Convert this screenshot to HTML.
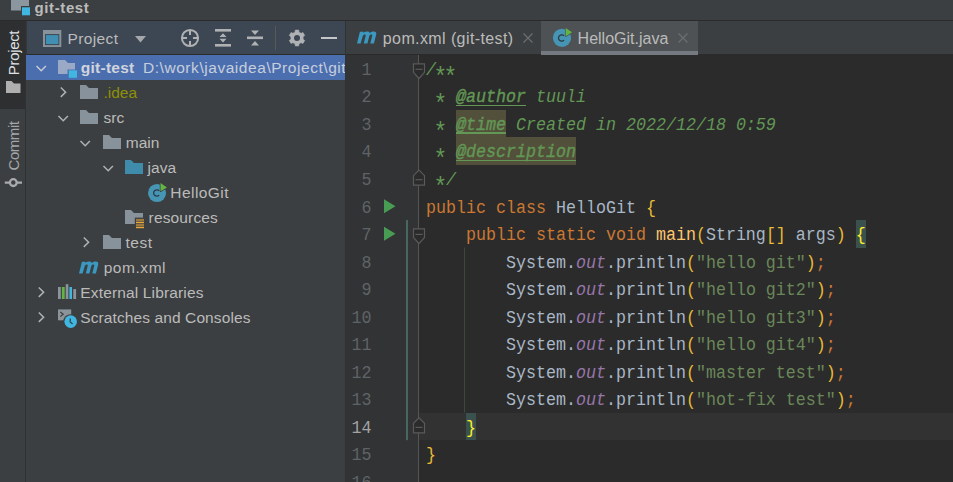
<!DOCTYPE html>
<html><head><meta charset="utf-8">
<style>
*{margin:0;padding:0;box-sizing:border-box}
html,body{width:953px;height:482px;overflow:hidden;background:#3c3f41}
body{position:relative;font-family:"Liberation Sans",sans-serif;color:#bbbbbb}
.a{position:absolute}
svg{position:absolute;overflow:visible}
#top{left:0;top:0;width:953px;height:20px;background:#3c3f41}
#topb{left:0;top:20px;width:953px;height:1px;background:#2b2b2b}
#strip{left:0;top:21px;width:25px;height:461px;background:#3c3f41}
#stripsel{left:0;top:21px;width:25px;height:88px;background:#2e2f30}
#stripb{left:25px;top:21px;width:1px;height:461px;background:#303132}
#proj{left:26px;top:21px;width:319px;height:461px;background:#3c3f41;overflow:hidden}
#phead{left:0;top:0;width:319px;height:33px;background:#3d4754}
#pheadb{left:0;top:33px;width:319px;height:1px;background:#2b2b2b}
#projb{left:345px;top:21px;width:1px;height:461px;background:#313233}
.row{position:absolute;left:0;width:319px;height:25px;white-space:nowrap}
.row .t{position:absolute;top:0;line-height:25px;font-size:15.5px;color:#bbbbbb}
.sel{background:#4b6eaf}
#ed{left:346px;top:21px;width:607px;height:461px;background:#2b2b2b;overflow:hidden}
#tabs{left:0;top:0;width:607px;height:33px;background:#3c3f41}
.ln{position:absolute;left:0.6px;transform-origin:0 18.1px;transform:translateY(2.3px) scaleY(1.11);width:25px;text-align:right;font-family:"Liberation Mono",monospace;font-size:16.67px;color:#606366;height:27.52px;line-height:27.52px}
.code{position:absolute;left:80px;transform-origin:0 18.1px;transform:translateY(2.3px) scaleY(1.11);white-space:pre;font-family:"Liberation Mono",monospace;font-size:16.67px;color:#a9b7c6;height:27.52px;line-height:27.52px}
.kw{color:#cc7832}
.str{color:#6a8759}
.doc{color:#629755;font-style:italic}
.tag{color:#629755;font-style:italic;font-weight:normal;-webkit-text-stroke:0.35px #629755}
.ast{display:inline-block;font-style:normal;width:10px;transform:translate(-0.6px,7.4px) scale(1.38)}
.br{color:#e8ba36}
.fn{color:#ffc66d}
.st{color:#9876aa;font-style:italic}
.lrow{position:absolute;left:0;width:607px;height:27.52px}
.cur .ln{color:#a4a3a3}
.mt{color:#ffef28}
</style></head><body>
<div id="top" class="a">
  <svg width="20" height="16" style="left:11px;top:0">
    <rect x="0" y="0" width="18" height="10.5" fill="#8c969e"/>
    <rect x="10" y="6" width="10" height="10" fill="#3c3f41"/>
    <rect x="11" y="7.3" width="8" height="8" fill="#40b6e0"/>
  </svg>
  <div class="a" style="left:34.6px;top:-2.35px;font-size:15px;font-weight:bold;color:#bbbbbb;line-height:20px;letter-spacing:0.6px">git-test</div>
</div>
<div id="topb" class="a"></div>
<div id="strip" class="a"></div>
<div id="stripsel" class="a"></div>
<div class="a" style="left:-15.4px;top:42.6px;width:58px;height:20px;transform:rotate(-90deg);font-size:15px;line-height:20px;color:#dfe1e5;text-align:center;letter-spacing:-0.35px">Project</div>
<svg width="16" height="14" style="left:6px;top:81px"><path d="M0 0 H5.5 L8 2.5 H14.5 V12 H0 Z" fill="#afafaf"/></svg>
<div class="a" style="left:-16px;top:135.5px;width:60px;height:20px;transform:rotate(-90deg);font-size:15px;line-height:20px;color:#a3a6a9;text-align:center;letter-spacing:-0.45px">Commit</div>
<svg width="20" height="12" style="left:4px;top:177px">
  <circle cx="9.3" cy="5.6" r="3.4" stroke="#a9abad" stroke-width="2.3" fill="none"/>
  <path d="M0.8 5.6 H6 M12.6 5.6 H18" stroke="#a9abad" stroke-width="2.3"/>
</svg>
<div id="stripb" class="a"></div>

<div id="proj" class="a">
  <div id="phead" class="a">
    <svg width="20" height="20" style="left:17px;top:9px">
      <rect x="0" y="0" width="18.3" height="17" fill="#87929a"/>
      <rect x="2" y="4.1" width="14.3" height="11" fill="#3d4754"/>
      <rect x="2.9" y="5.1" width="12.5" height="9" fill="#4190b3"/>
    </svg>
    <div class="a" style="left:41.6px;top:4.8px;font-size:15.5px;line-height:25px;color:#bbbbbb;letter-spacing:0.35px">Project</div>
    <svg width="12" height="8" style="left:108.5px;top:15px"><path d="M0 0 H11 L5.5 6.5 Z" fill="#a5a8ab"/></svg>
    <svg width="20" height="20" style="left:154px;top:8px">
      <circle cx="10" cy="9" r="8.1" stroke="#afb1b3" stroke-width="2" fill="none"/>
      <path d="M10 1 V6 M10 12 V17 M2 9 H7 M13 9 H18" stroke="#afb1b3" stroke-width="2"/>
    </svg>
    <svg width="20" height="20" style="left:189px;top:8px">
      <rect x="0" y="0" width="16" height="2.6" fill="#afb1b3"/>
      <rect x="0" y="15" width="16" height="2.6" fill="#afb1b3"/>
      <path d="M4.5 8 L8 4.3 L11.5 8 Z M4.5 9.8 L8 13.5 L11.5 9.8 Z" fill="#afb1b3"/>
    </svg>
    <svg width="20" height="20" style="left:221px;top:8px">
      <rect x="0" y="7.5" width="16" height="2.6" fill="#afb1b3"/>
      <path d="M4 1.5 H12 L8 6 Z M4 16.5 H12 L8 12 Z" fill="#afb1b3"/>
    </svg>
    <div class="a" style="left:249px;top:5px;width:1px;height:24px;background:#595854"></div>
    <svg width="18" height="18" style="left:263px;top:9px"><path d="M5.98 2.14 L6.32 0.08 L9.68 0.08 L10.02 2.14 L12.07 3.32 L14.02 2.58 L15.70 5.50 L14.09 6.82 L14.09 9.18 L15.70 10.50 L14.02 13.42 L12.07 12.68 L10.02 13.86 L9.68 15.92 L6.32 15.92 L5.98 13.86 L3.93 12.68 L1.98 13.42 L0.30 10.50 L1.91 9.18 L1.91 6.82 L0.30 5.50 L1.98 2.58 L3.93 3.32 Z" fill="#afb1b3" stroke="#afb1b3" stroke-width="0.6" stroke-linejoin="round"/><circle cx="8" cy="8" r="3" fill="#3d4754"/></svg>
    <div class="a" style="left:295px;top:15.8px;width:16px;height:2.5px;background:#c4c6c8"></div>
  </div>
  <div id="pheadb" class="a"></div>
  <div class="a" style="left:0;top:0;width:1px;height:33px;background:#35383a"></div>

  <div class="row sel" style="top:34px">
    <svg width="12" height="8" style="left:10px;top:9px"><path d="M0.5 2 L5.2 6.7 L9.9 2" stroke="#c5cbd6" stroke-width="1.5" fill="none"/></svg>
    <svg width="20" height="20" style="left:32px;top:5px">
      <path d="M0 0 H7 L10 3 H17 V14 H0 Z" fill="#9aaac6"/>
      <rect x="9.5" y="9.5" width="9" height="9" fill="#4b6eaf"/>
      <rect x="10.8" y="10.3" width="8.2" height="7.5" fill="#40b6e0"/>
    </svg>
    <div class="t" style="left:54.8px;font-weight:bold;color:#d0d4dc;letter-spacing:0.25px">git-test</div>
    <div class="t" style="left:117px;color:#c7cfdc;letter-spacing:0.55px">D:\work\javaidea\Project\git-test</div>
  </div>
  <div class="row" style="top:59px">
    <svg width="8" height="12" style="left:33px;top:6px"><path d="M1.8 1.5 L6.6 6.2 L1.8 10.9" stroke="#afb1b3" stroke-width="1.5" fill="none"/></svg>
    <svg width="20" height="20" style="left:54px;top:5px"><path d="M0 0 H6 L9 3 H18 V14 H0 Z" fill="#87929a"/></svg>
    <div class="t" style="left:77.5px;color:#8c9007">.idea</div>
  </div>
  <div class="row" style="top:84px">
    <svg width="12" height="8" style="left:32px;top:9px"><path d="M0.5 2 L5.2 6.7 L9.9 2" stroke="#afb1b3" stroke-width="1.5" fill="none"/></svg>
    <svg width="20" height="20" style="left:54px;top:5px"><path d="M0 0 H6 L9 3 H18 V14 H0 Z" fill="#87929a"/></svg>
    <div class="t" style="left:77.5px">src</div>
  </div>
  <div class="row" style="top:109px">
    <svg width="12" height="8" style="left:54px;top:9px"><path d="M0.5 2 L5.2 6.7 L9.9 2" stroke="#afb1b3" stroke-width="1.5" fill="none"/></svg>
    <svg width="20" height="20" style="left:77px;top:5px"><path d="M0 0 H6 L9 3 H18 V14 H0 Z" fill="#87929a"/></svg>
    <div class="t" style="left:99.8px">main</div>
  </div>
  <div class="row" style="top:134px">
    <svg width="12" height="8" style="left:77px;top:9px"><path d="M0.5 2 L5.2 6.7 L9.9 2" stroke="#afb1b3" stroke-width="1.5" fill="none"/></svg>
    <svg width="20" height="20" style="left:99px;top:5px"><path d="M0 0 H6 L9 3 H18 V14 H0 Z" fill="#3f8bab"/></svg>
    <div class="t" style="left:121.6px">java</div>
  </div>
  <div class="row" style="top:159px">
    <svg width="30" height="30" style="left:122px;top:0px"><circle cx="9.05" cy="13.00" r="9.05" fill="#4695b5"/><path d="M11.18 10.86 A3.20 3.20 0 1 0 11.18 15.14" stroke="#2c3b41" stroke-width="1.25" fill="none"/><path d="M12.50 3.10 L19.00 7.40 L12.50 11.30 Z" fill="#62b543" stroke="#3c3f41" stroke-width="1.4" paint-order="stroke" stroke-linejoin="round"/></svg>
    <div class="t" style="left:144.3px;letter-spacing:0.45px">HelloGit</div>
  </div>
  <div class="row" style="top:184px">
    <svg width="22" height="20" style="left:99px;top:5px">
      <path d="M0 0 H6 L9 3 H18 V14 H0 Z" fill="#87929a"/>
      <rect x="9.8" y="7.6" width="10.4" height="11.6" fill="#3c3f41"/>
      <rect x="11" y="8.9" width="8" height="2.2" fill="#9c7a3e"/>
      <rect x="11" y="11.7" width="8" height="1.5" fill="#e3a73a"/>
      <rect x="11" y="13.9" width="8" height="2.2" fill="#9c7a3e"/>
      <rect x="11" y="16.7" width="8" height="1.5" fill="#e3a73a"/>
    </svg>
    <div class="t" style="left:122.6px;letter-spacing:0.15px">resources</div>
  </div>
  <div class="row" style="top:209px">
    <svg width="8" height="12" style="left:56px;top:6px"><path d="M1.8 1.5 L6.6 6.2 L1.8 10.9" stroke="#afb1b3" stroke-width="1.5" fill="none"/></svg>
    <svg width="20" height="20" style="left:77px;top:5px"><path d="M0 0 H6 L9 3 H18 V14 H0 Z" fill="#87929a"/></svg>
    <div class="t" style="left:99.5px;letter-spacing:0.5px">test</div>
  </div>
  <div class="row" style="top:234px">
    <svg width="20" height="14" style="left:53.4px;top:5.8px"><path d="M0 12.5 L2.9 0.8 H6.5 L6.3 1.8 C7.5 0.9 8.9 0.5 10.2 0.5 C11.7 0.5 12.6 1.1 12.9 2.1 C14.1 0.9 15.5 0.5 16.9 0.5 C18.8 0.5 19.6 1.8 19.2 3.6 L16.9 12.5 H13.3 L15.2 4.8 C15.4 4 15 3.4 14.3 3.4 C13.4 3.4 12.6 4 12.3 5 L10.4 12.5 H6.8 L8.7 4.8 C8.9 4 8.5 3.4 7.8 3.4 C6.9 3.4 6.1 4 5.8 5 L3.6 12.5 Z" fill="#3a98c1"/></svg>
    <div class="t" style="left:77.7px;letter-spacing:0.55px">pom.xml</div>
  </div>
  <div class="row" style="top:259px">
    <svg width="8" height="12" style="left:11px;top:6px"><path d="M1.8 1.5 L6.6 6.2 L1.8 10.9" stroke="#afb1b3" stroke-width="1.5" fill="none"/></svg>
    <svg width="20" height="22" style="left:32px;top:0"><rect x="0" y="7" width="2.8" height="12" fill="#8c949a"/><rect x="3.9" y="7" width="2.8" height="12" fill="#62b543"/><rect x="7.7" y="4.2" width="2.7" height="14.8" fill="#8c949a"/><rect x="11.4" y="7" width="2.6" height="12" fill="#40b6e0"/><rect x="15.3" y="9.1" width="2.8" height="9.9" fill="#8c949a"/></svg>
    <div class="t" style="left:54.3px;letter-spacing:0.15px">External Libraries</div>
  </div>
  <div class="row" style="top:284px">
    <svg width="8" height="12" style="left:11px;top:6px"><path d="M1.8 1.5 L6.6 6.2 L1.8 10.9" stroke="#afb1b3" stroke-width="1.5" fill="none"/></svg>
    <svg width="22" height="24" style="left:32px;top:0"><rect x="0" y="4.4" width="13.2" height="10.9" fill="#8c949a"/><path d="M2.3 7 L5.2 9.3 L2.3 11.6" stroke="#3c3f41" stroke-width="1.2" fill="none"/><circle cx="12.7" cy="16.6" r="7.4" fill="#3c3f41"/><circle cx="12.7" cy="16.6" r="6.3" fill="#40b6e0"/><path d="M12.2 13.6 V16.9 L14.6 19" stroke="#2b4a56" stroke-width="1.3" fill="none"/></svg>
    <div class="t" style="left:54.3px;letter-spacing:0.1px">Scratches and Consoles</div>
  </div>
</div>
<div id="projb" class="a"></div>

<div id="ed" class="a">
  <div id="tabs" class="a">
    <svg width="20" height="14" style="left:11.4px;top:9.8px"><path d="M0 12.5 L2.9 0.8 H6.5 L6.3 1.8 C7.5 0.9 8.9 0.5 10.2 0.5 C11.7 0.5 12.6 1.1 12.9 2.1 C14.1 0.9 15.5 0.5 16.9 0.5 C18.8 0.5 19.6 1.8 19.2 3.6 L16.9 12.5 H13.3 L15.2 4.8 C15.4 4 15 3.4 14.3 3.4 C13.4 3.4 12.6 4 12.3 5 L10.4 12.5 H6.8 L8.7 4.8 C8.9 4 8.5 3.4 7.8 3.4 C6.9 3.4 6.1 4 5.8 5 L3.6 12.5 Z" fill="#3a98c1"/></svg>
    <div class="a" style="left:36.8px;top:4.6px;font-size:16px;line-height:25px;color:#bbbbbb;letter-spacing:0.4px">pom.xml (git-test)</div>
    <svg width="12" height="12" style="left:177px;top:12px"><path d="M0.5 0.5 L9.5 9.5 M9.5 0.5 L0.5 9.5" stroke="#6e7072" stroke-width="1.1"/></svg>
    <div class="a" style="left:195px;top:0;width:157px;height:33px;background:#4e5254"></div>
    <div class="a" style="left:195px;top:30px;width:157px;height:3.5px;background:#747a80"></div>
    <svg width="30" height="30" style="left:202px;top:3px"><circle cx="14.00" cy="13.80" r="9.10" fill="#4695b5"/><path d="M16.08 11.86 A3.20 3.20 0 1 0 16.08 16.14" stroke="#2c3b41" stroke-width="1.25" fill="none"/><path d="M17.70 4.10 L24.10 8.30 L17.70 12.20 Z" fill="#62b543" stroke="#4e5254" stroke-width="1.4" paint-order="stroke" stroke-linejoin="round"/></svg>
    <div class="a" style="left:231.6px;top:4.6px;font-size:16px;line-height:25px;color:#bbbbbb;letter-spacing:0px">HelloGit.java</div>
    <svg width="12" height="12" style="left:332px;top:12px"><path d="M0.5 0.5 L9.5 9.5 M9.5 0.5 L0.5 9.5" stroke="#6e7072" stroke-width="1.1"/></svg>
  </div>
  <div id="edc" class="a" style="left:0;top:34px;width:607px;height:427px;overflow:hidden">
    <div class="a" style="left:0;top:0;width:73px;height:427px;background:#313335"></div>
    <div class="a" style="left:73px;top:357.66px;width:534px;height:27.52px;background:#323232"></div>
    <div class="a" style="left:110.0px;top:54.94px;width:50.0px;height:27.52px;background:#52503a"></div>
    <div class="a" style="left:110.0px;top:82.46px;width:120.0px;height:27.52px;background:#52503a"></div>
    <div class="a" style="left:510.0px;top:165.02px;width:10.0px;height:27.52px;background:#3b514d"></div>
    <div class="a" style="left:120.0px;top:357.66px;width:10.0px;height:27.52px;background:#3b514d"></div>
    <div class="a" style="left:110.0px;top:49.72px;width:70.0px;height:1.4px;background:#629755"></div>
    <div class="a" style="left:110.0px;top:77.24px;width:50.0px;height:1.4px;background:#629755"></div>
    <div class="a" style="left:110.0px;top:104.76px;width:120.0px;height:1.4px;background:#629755"></div>
    <svg width="607" height="427" style="left:0;top:0"><rect x="72" y="0" width="1" height="427" fill="#555555"/><rect x="60" y="165.02" width="2" height="220.16" fill="#49665f"/><path d="M38 144.20 L49.5 151.20 L38 158.20 Z" fill="#499c54"/><path d="M38 171.72 L49.5 178.72 L38 185.72 Z" fill="#499c54"/><path d="M67.5 8.80 H78.5 V17.30 L73 23.50 L67.5 17.30 Z" fill="#2b2b2b" stroke="#5a5a5a" stroke-width="1.2"/><path d="M69.5 14.30 H76.5" stroke="#5a5a5a" stroke-width="1.2"/><path d="M67.5 173.92 H78.5 V182.42 L73 188.62 L67.5 182.42 Z" fill="#2b2b2b" stroke="#5a5a5a" stroke-width="1.2"/><path d="M69.5 179.42 H76.5" stroke="#5a5a5a" stroke-width="1.2"/><path d="M67.5 130.18 H78.5 V120.68 L73 115.18 L67.5 120.68 Z" fill="#2b2b2b" stroke="#5a5a5a" stroke-width="1.2"/><path d="M69.5 124.68 H76.5" stroke="#5a5a5a" stroke-width="1.2"/><path d="M67.5 377.86 H78.5 V368.36 L73 362.86 L67.5 368.36 Z" fill="#2b2b2b" stroke="#5a5a5a" stroke-width="1.2"/><path d="M69.5 372.36 H76.5" stroke="#5a5a5a" stroke-width="1.2"/><rect x="118" y="192.54" width="1" height="165.12" fill="#3b4a3b"/></svg>
    <div class="lrow" style="top:-0.10px"><div class="ln">1</div><div class="code"><span class="doc">/<span class="ast">*</span><span class="ast">*</span></span></div></div>
    <div class="lrow" style="top:27.42px"><div class="ln">2</div><div class="code"><span class="doc"> <span class="ast">*</span> </span><span class="tag">@author</span><span class="doc"> tuuli</span></div></div>
    <div class="lrow" style="top:54.94px"><div class="ln">3</div><div class="code"><span class="doc"> <span class="ast">*</span> </span><span class="tag">@time</span><span class="doc"> Created in 2022/12/18 0:59</span></div></div>
    <div class="lrow" style="top:82.46px"><div class="ln">4</div><div class="code"><span class="doc"> <span class="ast">*</span> </span><span class="tag">@description</span></div></div>
    <div class="lrow" style="top:109.98px"><div class="ln">5</div><div class="code"><span class="doc"> <span class="ast">*</span>/</span></div></div>
    <div class="lrow" style="top:137.50px"><div class="ln">6</div><div class="code"><span class="kw">public class </span>HelloGit <span class="br">{</span></div></div>
    <div class="lrow" style="top:165.02px"><div class="ln">7</div><div class="code"><span class="kw">    public static void </span><span class="fn">main</span><span class="br">(</span>String<span class="br">[]</span> args<span class="br">)</span> <span class="mt">{</span></div></div>
    <div class="lrow" style="top:192.54px"><div class="ln">8</div><div class="code">        System.<span class="st">out</span>.println<span class="br">(</span><span class="str">"hello git"</span><span class="br">)</span><span class="kw">;</span></div></div>
    <div class="lrow" style="top:220.06px"><div class="ln">9</div><div class="code">        System.<span class="st">out</span>.println<span class="br">(</span><span class="str">"hello git2"</span><span class="br">)</span><span class="kw">;</span></div></div>
    <div class="lrow" style="top:247.58px"><div class="ln">10</div><div class="code">        System.<span class="st">out</span>.println<span class="br">(</span><span class="str">"hello git3"</span><span class="br">)</span><span class="kw">;</span></div></div>
    <div class="lrow" style="top:275.10px"><div class="ln">11</div><div class="code">        System.<span class="st">out</span>.println<span class="br">(</span><span class="str">"hello git4"</span><span class="br">)</span><span class="kw">;</span></div></div>
    <div class="lrow" style="top:302.62px"><div class="ln">12</div><div class="code">        System.<span class="st">out</span>.println<span class="br">(</span><span class="str">"master test"</span><span class="br">)</span><span class="kw">;</span></div></div>
    <div class="lrow" style="top:330.14px"><div class="ln">13</div><div class="code">        System.<span class="st">out</span>.println<span class="br">(</span><span class="str">"hot-fix test"</span><span class="br">)</span><span class="kw">;</span></div></div>
    <div class="lrow cur" style="top:357.66px"><div class="ln">14</div><div class="code">    <span class="mt">}</span></div></div>
    <div class="lrow" style="top:385.18px"><div class="ln">15</div><div class="code"><span class="br">}</span></div></div>
    <div class="lrow" style="top:412.70px"><div class="ln">16</div><div class="code"></div></div>
  </div>
</div>
</body></html>
